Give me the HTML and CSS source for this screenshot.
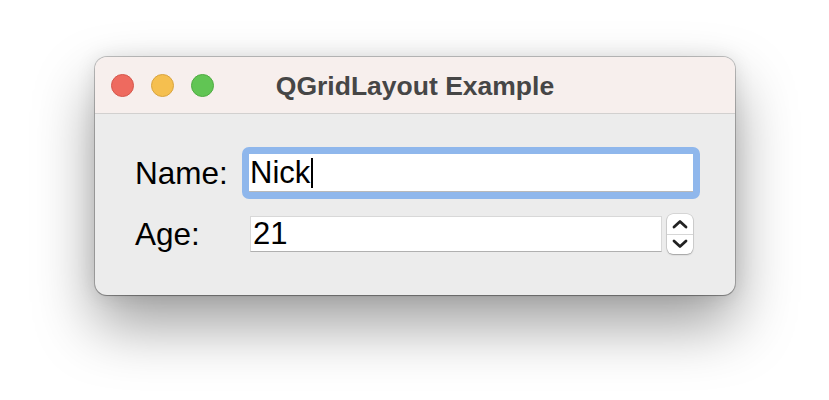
FILE: index.html
```html
<!DOCTYPE html>
<html>
<head>
<meta charset="utf-8">
<link rel="stylesheet" href="styles.css">
</head>
<body>
<div class="window">
  <div class="titlebar">
    <div class="lights">
      <span class="light red"></span>
      <span class="light yellow"></span>
      <span class="light green"></span>
    </div>
    <div class="title">QGridLayout Example</div>
    <div></div>
  </div>
  <div class="content">
    <div class="label">Name:</div>
    <div class="name-ring">
      <div class="name-field"><span class="val">Nick</span><span class="caret"></span></div>
    </div>
    <div class="label">Age:</div>
    <div class="age-row">
      <div class="age-field">21</div>
      <div class="spinner">
        <div class="spin-half">
          <svg width="16" height="10" viewBox="0 0 16 10"><path d="M2 8 L8 2.5 L14 8" fill="none" stroke="#222" stroke-width="2.8" stroke-linecap="round" stroke-linejoin="round"/></svg>
        </div>
        <div class="spin-half down">
          <svg width="16" height="10" viewBox="0 0 16 10"><path d="M2 2 L8 7.5 L14 2" fill="none" stroke="#222" stroke-width="2.8" stroke-linecap="round" stroke-linejoin="round"/></svg>
        </div>
      </div>
    </div>
  </div>
</div>
</body>
</html>
```

FILE: styles.css
```css
html, body {
  margin: 0;
  padding: 0;
  background: #ffffff;
}
body {
  width: 829px;
  height: 400px;
  overflow: hidden;
  font-family: "Liberation Sans", Arial, sans-serif;
}
.window {
  margin: 57px 0 0 95px;
  width: 640px;
  height: 238px;
  border-radius: 12px;
  background: #ececec;
  overflow: hidden;
  box-shadow: 0 0 0 1px rgba(0,0,0,0.22), 0 1px 1px rgba(0,0,0,0.2), 0 30px 60px rgba(0,0,0,0.38), 0 0 20px rgba(0,0,0,0.1);
  display: flex;
  flex-direction: column;
}
.titlebar {
  height: 56px;
  background: #f7efed;
  border-bottom: 1px solid #d2d0cf;
  display: grid;
  grid-template-columns: 1fr auto 1fr;
  align-items: center;
}
.lights {
  display: flex;
  gap: 17px;
  padding-left: 16px;
}
.light {
  width: 23px;
  height: 23px;
  border-radius: 50%;
  box-sizing: border-box;
}
.red { background: #ee6a5f; border: 1px solid #d5574c; }
.yellow { background: #f5bf4f; border: 1px solid #d9a43f; }
.green { background: #61c554; border: 1px solid #4fab42; }
.title {
  font-size: 26.5px;
  font-weight: bold;
  color: #464646;
  padding-top: 2px;
}
.content {
  display: grid;
  grid-template-columns: 107px 458px;
  grid-template-rows: 52px 40px;
  row-gap: 15px;
  padding: 33px 0 0 40px;
  align-items: center;
}
.label {
  font-size: 31.5px;
  color: #000;
}
.name-ring {
  height: 52px;
  box-sizing: border-box;
  border: 7px solid #8fb7ec;
  border-radius: 7px;
  background: #8fb7ec;
}
.name-field {
  height: 38px;
  background: #fff;
  box-sizing: border-box;
  border-bottom: 1px solid #b9b9b9;
  display: flex;
  align-items: center;
  padding-left: 1px;
  font-size: 31px;
  color: #000;
}
.caret {
  width: 1.5px;
  height: 30px;
  background: #000;
  margin-left: 1px;
}
.age-row {
  display: flex;
  align-items: center;
  gap: 5px;
  padding-left: 8px;
  height: 40px;
}
.age-field {
  width: 412px;
  height: 36px;
  box-sizing: border-box;
  background: #fff;
  border: 1px solid #d8d8d8;
  border-bottom-color: #b0b0b0;
  font-size: 31px;
  line-height: 34px;
  padding-left: 2px;
  color: #000;
}
.spinner {
  width: 26px;
  height: 40px;
  box-sizing: border-box;
  border-radius: 6px;
  background: #fff;
  box-shadow: 0 0 0 0.5px rgba(0,0,0,0.18), 0 1px 1.5px rgba(0,0,0,0.25);
  display: flex;
  flex-direction: column;
  overflow: hidden;
}
.spin-half {
  flex: 1;
  display: flex;
  align-items: center;
  justify-content: center;
}
.spin-half.down {
  border-top: 1px solid #d6d6d6;
}
```
